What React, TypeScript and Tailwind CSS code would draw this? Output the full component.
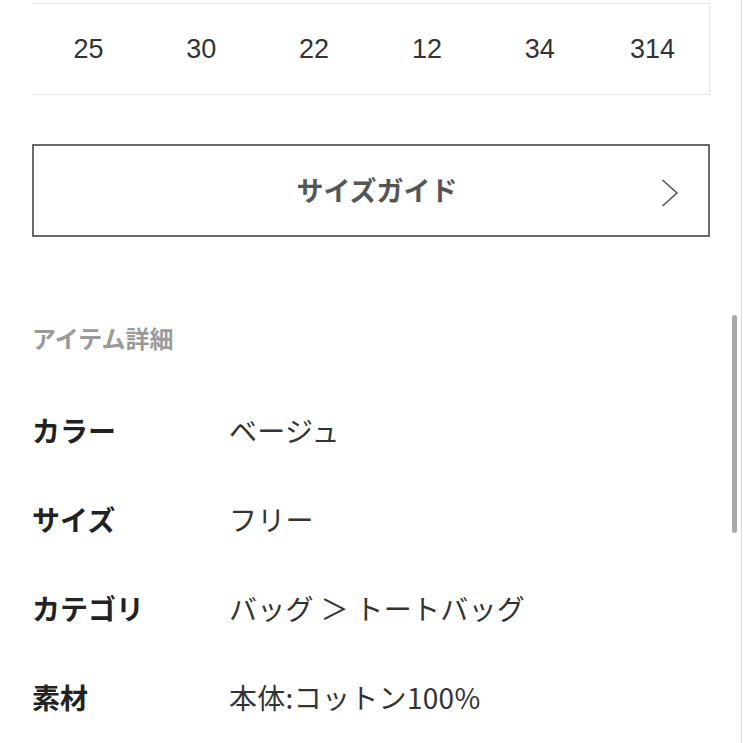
import React from "react";

const jp = { fontFamily: '"Noto Sans CJK JP", "Noto Sans", sans-serif' };
const num = { fontFamily: '"Liberation Sans", Arial, sans-serif' };

const rows: [string, string][] = [
  ["カラー", "ベージュ"],
  ["サイズ", "フリー"],
  ["カテゴリ", "バッグ ＞ トートバッグ"],
  ["素材", "本体:コットン100%"],
];

export default function App() {
  return (
    <div className="relative w-[743px] h-[743px] overflow-hidden bg-white" style={jp}>
      <div className="pl-[32px] w-[710px] pt-[3px]">
        <div className="grid grid-cols-6 h-[92px] border-t border-b border-r border-[#e6e6e6] items-center text-[27px] text-[#333]" style={num}>
          {["25", "30", "22", "12", "34", "314"].map((n) => (
            <div key={n} className="text-center">{n}</div>
          ))}
        </div>

        <div className="mt-[49px] h-[93px] border-2 border-[#6a6a6a] flex items-center justify-center relative">
          <span className="text-[27px] font-bold text-[#555] pl-[12px]">サイズガイド</span>
          <svg className="absolute right-[29px] top-[33px]" width="18" height="28" viewBox="0 0 18 28">
            <polyline points="1.5,1 16,14 1.5,27" fill="none" stroke="#555" strokeWidth="1.6" />
          </svg>
        </div>

        <div className="mt-[83px] h-[36px] leading-[36px] text-[24px] font-bold text-[#9a9a9a]">アイテム詳細</div>

        <div className="mt-[29px]">
          {rows.map(([k, v]) => (
            <div key={k} className="h-[89px] flex items-center text-[28px]">
              <div className="w-[197px] font-bold text-[#222]">{k}</div>
              <div className="text-[#333] tracking-[0.3px]">{v}</div>
            </div>
          ))}
        </div>
      </div>

      <div className="absolute left-[732px] top-[315px] w-[5px] h-[218px] rounded-full bg-[#a8a8a8]" />
      <div className="absolute left-[741px] top-0 w-px h-full bg-[#dddddd]" />
    </div>
  );
}
